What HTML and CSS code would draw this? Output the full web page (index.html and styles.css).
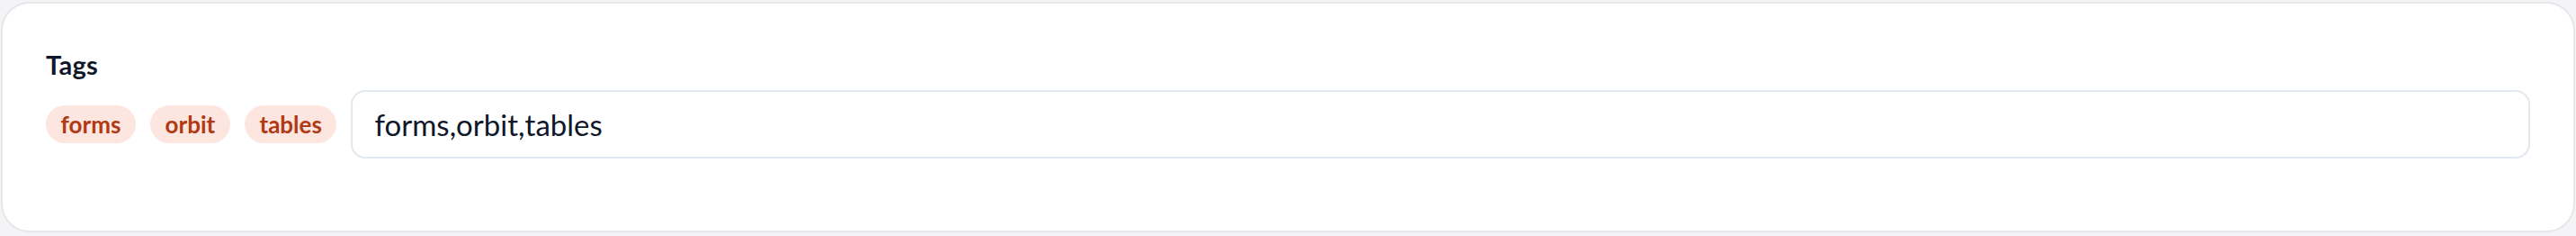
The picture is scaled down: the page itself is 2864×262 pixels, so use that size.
FILE: index.html
```html
<!DOCTYPE html>
<html lang="en">
<head>
<meta charset="utf-8">
<title>Tags</title>
<link rel="stylesheet" href="styles.css">
</head>
<body>
  <div class="card">
    <label class="label" for="tags">Tags</label>
    <div class="row">
      <div class="chips">
        <span class="chip">forms</span>
        <span class="chip">orbit</span>
        <span class="chip">tables</span>
      </div>
      <input class="input" id="tags" type="text" value="forms,orbit,tables">
    </div>
  </div>
</body>
</html>
```
FILE: styles.css
```css
* { box-sizing: border-box; }
html, body { margin: 0; }
body {
  background: #f4f4f6;
  padding: 2px 1px 4px 1px;
  font-family: "Lato", "Inter", sans-serif;
  color: #0f172a;
}
.card {
  background: #ffffff;
  border: 2px solid #e5e7eb;
  border-radius: 32px;
  padding: 48px 48px 79px 48px;
  height: 256px;
}
.label {
  display: block;
  font-size: 29px;
  line-height: 40px;
  font-weight: 700;
  letter-spacing: 0.3px;
  color: #0f172a;
  margin-bottom: 8px;
}
.row {
  display: flex;
  align-items: center;
  gap: 16px;
}
.chips {
  display: flex;
  gap: 16px;
  flex: none;
}
.chip {
  display: inline-flex;
  align-items: center;
  justify-content: center;
  height: 42px;
  padding: 0 16.6px;
  border-radius: 999px;
  background: #fde6e0;
  color: #b03a14;
  font-size: 26px;
  font-weight: 700;
}
.input {
  flex: 1;
  min-width: 0;
  height: 76px;
  border: 2px solid #e2e8f0;
  border-radius: 16px;
  padding: 0 24px;
  font-family: inherit;
  font-size: 33px;
  color: #0f172a;
  background: #fff;
  outline: none;
}
```
